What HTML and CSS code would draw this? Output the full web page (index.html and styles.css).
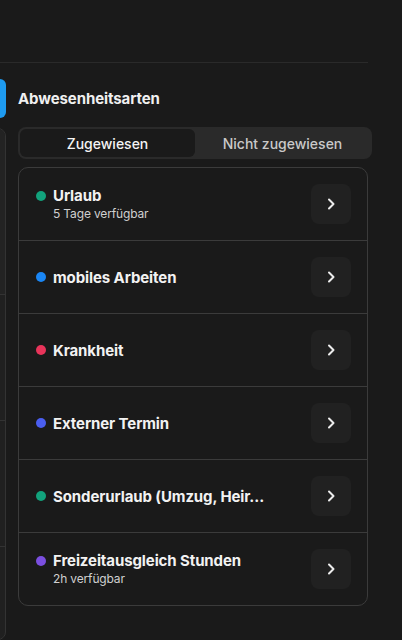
FILE: index.html
```html
<!DOCTYPE html>
<html lang="de">
<head>
<meta charset="utf-8">
<link rel="stylesheet" href="styles.css">
</head>
<body>
<div class="top"></div>
<div class="topline"></div>
<div class="layout">
  <div class="side">
    <div class="side-pill"></div>
    <div class="side-panel">
      <div class="side-row r1"></div>
      <div class="side-row r2"></div>
      <div class="side-row r3"></div>
      <div class="side-row r4"></div>
    </div>
  </div>
  <div class="main">
    <h2 class="title">Abwesenheitsarten</h2>
    <div class="tabs">
      <div class="tab active">Zugewiesen</div>
      <div class="tab">Nicht zugewiesen</div>
    </div>
    <div class="card">
      <div class="row">
        <div class="info">
          <span class="dot green"></span>
          <div class="text"><div class="name">Urlaub</div><div class="sub">5 Tage verfügbar</div></div>
        </div>
        <button class="go"><svg width="12" height="12" viewBox="0 0 12 12"><path d="M4 1.5 L8.5 6 L4 10.5" fill="none" stroke="#ececec" stroke-width="2" stroke-linecap="round" stroke-linejoin="round"/></svg></button>
      </div>
      <div class="row">
        <div class="info">
          <span class="dot blue"></span>
          <div class="text"><div class="name">mobiles Arbeiten</div></div>
        </div>
        <button class="go"><svg width="12" height="12" viewBox="0 0 12 12"><path d="M4 1.5 L8.5 6 L4 10.5" fill="none" stroke="#ececec" stroke-width="2" stroke-linecap="round" stroke-linejoin="round"/></svg></button>
      </div>
      <div class="row">
        <div class="info">
          <span class="dot red"></span>
          <div class="text"><div class="name">Krankheit</div></div>
        </div>
        <button class="go"><svg width="12" height="12" viewBox="0 0 12 12"><path d="M4 1.5 L8.5 6 L4 10.5" fill="none" stroke="#ececec" stroke-width="2" stroke-linecap="round" stroke-linejoin="round"/></svg></button>
      </div>
      <div class="row">
        <div class="info">
          <span class="dot indigo"></span>
          <div class="text"><div class="name">Externer Termin</div></div>
        </div>
        <button class="go"><svg width="12" height="12" viewBox="0 0 12 12"><path d="M4 1.5 L8.5 6 L4 10.5" fill="none" stroke="#ececec" stroke-width="2" stroke-linecap="round" stroke-linejoin="round"/></svg></button>
      </div>
      <div class="row">
        <div class="info">
          <span class="dot green"></span>
          <div class="text"><div class="name">Sonderurlaub (Umzug, Heir...</div></div>
        </div>
        <button class="go"><svg width="12" height="12" viewBox="0 0 12 12"><path d="M4 1.5 L8.5 6 L4 10.5" fill="none" stroke="#ececec" stroke-width="2" stroke-linecap="round" stroke-linejoin="round"/></svg></button>
      </div>
      <div class="row">
        <div class="info">
          <span class="dot purple"></span>
          <div class="text"><div class="name">Freizeitausgleich Stunden</div><div class="sub">2h verfügbar</div></div>
        </div>
        <button class="go"><svg width="12" height="12" viewBox="0 0 12 12"><path d="M4 1.5 L8.5 6 L4 10.5" fill="none" stroke="#ececec" stroke-width="2" stroke-linecap="round" stroke-linejoin="round"/></svg></button>
      </div>
    </div>
  </div>
</div>
</body>
</html>
```
FILE: styles.css
```css
* { box-sizing: border-box; }
html, body { margin: 0; padding: 0; }
body {
  background: #1a1a1a;
  font-family: Inter, "Noto Sans", sans-serif;
  color: #f2f2f2;
  width: 402px;
  height: 640px;
  overflow: hidden;
}
.top { height: 62px; }
.topline { height: 1px; width: 368px; background: #2a2a2a; }
.layout { display: flex; height: 577px; }
.side { width: 6px; flex: none; display: flex; flex-direction: column; }
.side-pill {
  flex: none;
  margin-top: 16px;
  height: 39px;
  width: 6px;
  background: #1e9bf0;
  border-radius: 0 7px 7px 0;
}
.side-panel {
  margin-top: 10px;
  flex: 1;
  margin-left: -20px;
  width: 26px;
  border: 1px solid #333;
  border-radius: 8px;
  background: #202020;
  display: flex;
  flex-direction: column;
  overflow: hidden;
}
.side-row { flex: none; height: 126px; border-bottom: 1px solid #333; }
.side-row.r1 { height: 166px; background: #232323; }
.main { margin-left: 12px; width: 354px; flex: none; }
.title {
  margin: 26px 0 0;
  font-size: 15px;
  line-height: 20px;
  font-weight: 700;
  color: #f0f0f0;
  letter-spacing: -0.1px;
}
.tabs {
  margin-top: 18px;
  height: 32px;
  background: #2a2a2a;
  border-radius: 8px;
  padding: 2px;
  display: flex;
}
.tab {
  flex: 1;
  display: flex;
  align-items: center;
  justify-content: center;
  font-size: 14px;
  font-weight: 500;
  color: #c9c9c9;
  border-radius: 6px;
}
.tab.active { background: #1a1a1a; color: #f4f4f4; }
.card {
  margin-top: 8px;
  width: 350px;
  border: 1px solid #3b3b3b;
  border-radius: 10px;
}
.row {
  height: 72px;
  display: flex;
  align-items: center;
  padding: 0 16px 0 17px;
}
.row + .row { height: 73px; border-top: 1px solid #3b3b3b; }
.info { flex: 1; min-width: 0; display: flex; align-items: flex-start; }
.dot { width: 10px; height: 10px; border-radius: 50%; flex: none; margin-top: 4.5px; }
.green { background: #12a27c; }
.blue { background: #1a86f4; }
.red { background: #e8345a; }
.indigo { background: #4a5ef0; }
.purple { background: #7b4fe0; }
.text { flex: 1; margin-left: 7px; min-width: 0; }
.name {
  font-size: 15px;
  font-weight: 700;
  line-height: 19px;
  color: #f2f2f2;
  white-space: nowrap;
  overflow: hidden;
  letter-spacing: -0.1px;
}
.sub { font-size: 12px; line-height: 16px; color: #d0d0d0; margin-top: 1px; letter-spacing: -0.15px; }
.go {
  width: 40px;
  height: 40px;
  border: none;
  border-radius: 8px;
  background: #212121;
  display: flex;
  align-items: center;
  justify-content: center;
  padding: 0;
  flex: none;
}
.go svg { display: block; }
```
